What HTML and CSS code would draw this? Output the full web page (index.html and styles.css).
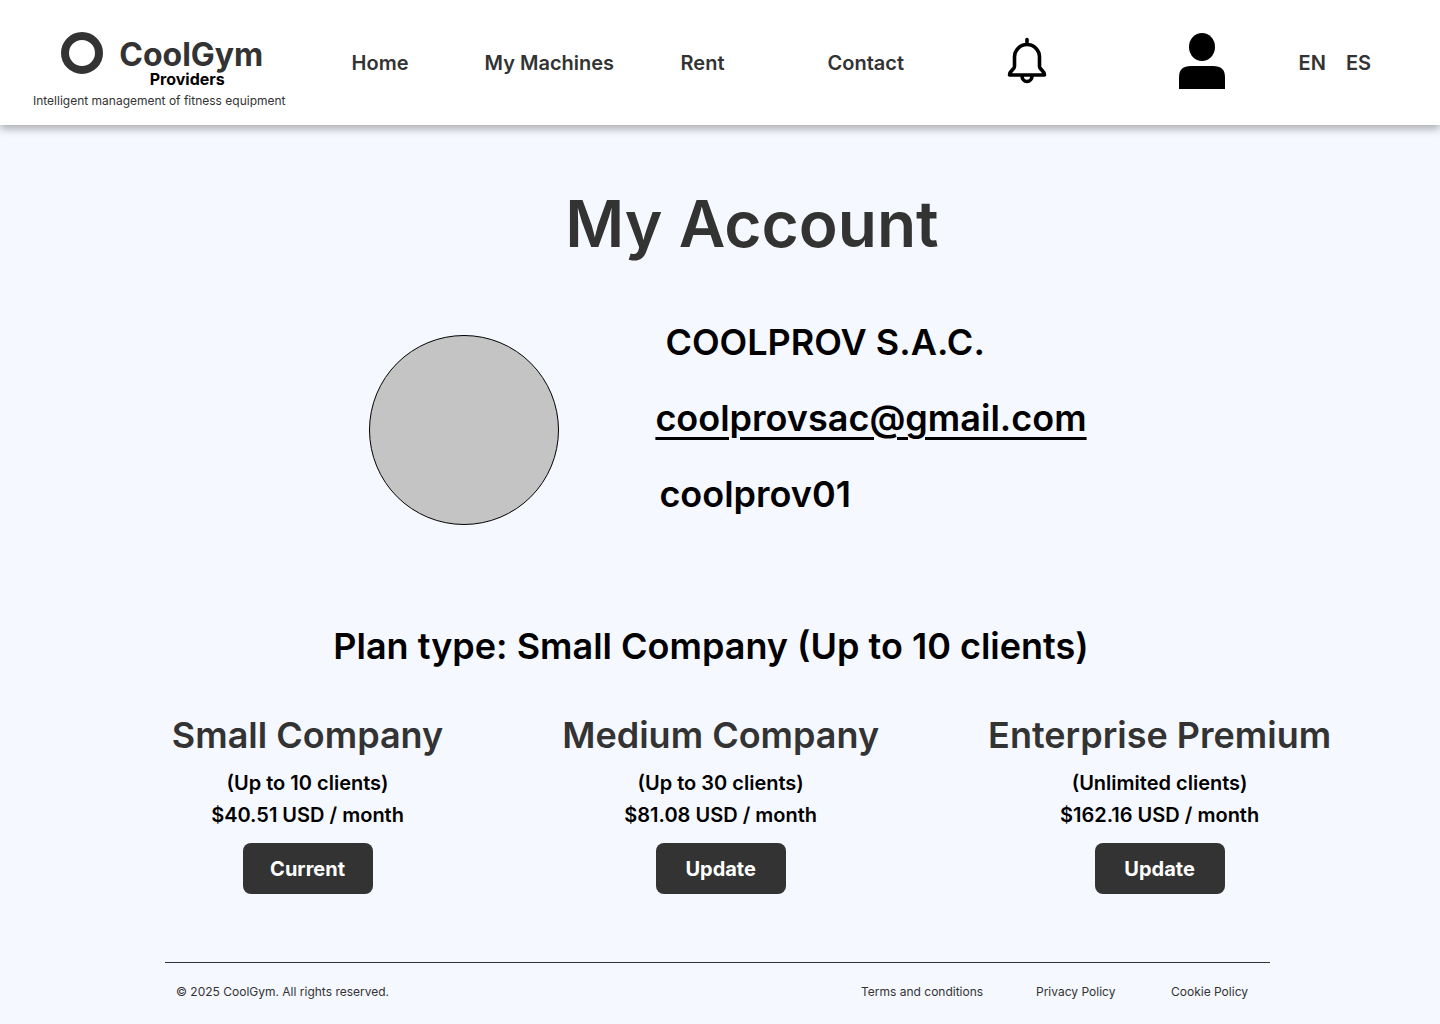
FILE: index.html
```html
<!DOCTYPE html>
<html lang="en">
<head>
<meta charset="utf-8">
<meta name="viewport" content="width=device-width, initial-scale=1">
<title>My Account - CoolGym Providers</title>
<link rel="stylesheet" href="styles.css">
</head>
<body>
<header class="header">
  <a class="brand" href="#">
    <span class="brand-row">
      <svg class="brand-ring" viewBox="0 0 42 42" aria-hidden="true"><circle cx="21" cy="21" r="17" fill="none" stroke="#333" stroke-width="8"/></svg>
      <span class="brand-name">CoolGym</span>
    </span>
    <span class="brand-sub">Providers</span>
    <span class="brand-tag">Intelligent management of fitness equipment</span>
  </a>
  <nav class="nav" aria-label="Main">
    <a href="#">Home</a>
    <a href="#">My Machines</a>
    <a href="#">Rent</a>
    <a href="#">Contact</a>
  </nav>
  <div class="tools">
    <button class="icon-button" type="button" aria-label="Notifications">
      <svg class="bell" viewBox="0 0 40 48" fill="none" stroke="#000" stroke-width="3.6" stroke-linecap="round" stroke-linejoin="round" aria-hidden="true"><path d="M20 2.500v5M7.500 20a12.500 12.500 0 0 1 25 0V29.500c0 3 5 4 5 8.500h-35c0-4.500 5-5.500 5-8.500zM15 39a5 5.500 0 0 0 10 0"/></svg>
    </button>
    <button class="icon-button" type="button" aria-label="Account">
      <svg class="person" viewBox="0 0 46 56" aria-hidden="true"><ellipse cx="23" cy="14" rx="13" ry="14"/><path d="M0 56V44Q0 33 12 33H34Q46 33 46 44V56Z"/></svg>
    </button>
    <div class="languages"><a href="#" lang="en">EN</a><a href="#" lang="es">ES</a></div>
  </div>
</header>
<main class="main">
  <h1 class="title">My Account</h1>
  <section class="profile" aria-label="Profile">
    <div class="avatar"></div>
    <div class="details">
      <p class="company">COOLPROV S.A.C.</p>
      <p><a href="mailto:coolprovsac@gmail.com">coolprovsac@gmail.com</a></p>
      <p class="username">coolprov01</p>
    </div>
  </section>
  <h2 class="plan-type">Plan type: Small Company (Up to 10 clients)</h2>
  <section class="plans" aria-label="Plans">
    <article class="plan">
      <h3>Small Company</h3>
      <p>(Up to 10 clients)</p>
      <p>$40.51 USD / month</p>
      <button type="button">Current</button>
    </article>
    <article class="plan">
      <h3>Medium Company</h3>
      <p>(Up to 30 clients)</p>
      <p>$81.08 USD / month</p>
      <button type="button">Update</button>
    </article>
    <article class="plan">
      <h3>Enterprise Premium</h3>
      <p>(Unlimited clients)</p>
      <p>$162.16 USD / month</p>
      <button type="button">Update</button>
    </article>
  </section>
</main>
<footer class="footer">
  <p>© 2025 CoolGym. All rights reserved.</p>
  <nav class="legal" aria-label="Legal">
    <a href="#">Terms and conditions</a>
    <a href="#">Privacy Policy</a>
    <a href="#">Cookie Policy</a>
  </nav>
</footer>
</body>
</html>
```
FILE: styles.css
```css
* { box-sizing: border-box; }
body { margin: 0; background: #f5f8ff; color: #000; font-family: Inter, sans-serif; font-weight: 600; }
h1, h2, h3, p { margin: 0; font-weight: 600; }
a { color: inherit; text-decoration: none; }
button { font: inherit; border: 0; cursor: pointer; }

.header { display: flex; align-items: center; min-height: 125px; padding: 0 69px 0 33px; background: #fff; color: #333; box-shadow: 0 4px 8px rgba(0, 0, 0, .3); }
.brand { display: flex; flex-direction: column; align-items: center; padding-top: 16px; white-space: nowrap; }
.brand-row { display: flex; align-items: flex-start; gap: 16px; height: 37px; padding-left: 6px; }
.brand-ring { width: 42px; height: 42px; }
.brand-name { font-size: 32px; line-height: 46px; font-weight: 700; }
.brand-sub { margin-left: 56px; font-size: 16px; line-height: 20px; font-weight: 700; color: #000; }
.brand-tag { margin-top: 4px; font-size: 12px; line-height: 16px; font-weight: 400; }
.nav { display: grid; grid-template-columns: 133px 196px 147px auto; margin-left: 66px; font-size: 20px; line-height: 24px; white-space: nowrap; }
.tools { display: flex; flex: 1; align-items: center; justify-content: flex-end; font-size: 20px; line-height: 24px; }
.icon-button { display: flex; padding: 0 0 4px; background: none; }
.bell { width: 40px; height: 48px; margin-right: 132px; }
.person { width: 46px; height: 56px; margin-right: 74px; }
.languages { display: flex; gap: 20px; }

.main { padding-top: 60px; }
.title { padding-left: 64px; font-size: 64px; line-height: 78px; text-align: center; color: #333; }
.profile { display: flex; justify-content: center; align-items: center; gap: 96px; margin-top: 57px; padding-left: 16px; font-size: 36px; line-height: 44px; }
.avatar { width: 190px; height: 190px; border: 1px solid #000; border-radius: 50%; background: #c4c4c4; }
.details { display: flex; flex-direction: column; gap: 32px; padding-bottom: 24px; }
.details a { text-decoration: underline 3px; text-underline-offset: 6px; }
.company { padding-left: 10px; }
.username { padding-left: 4px; }
.plan-type { margin-top: 84px; padding-right: 18px; font-size: 36px; line-height: 44px; text-align: center; }
.plans { display: grid; grid-template-columns: 8fr 8fr 9fr; margin-top: 45px; padding: 0 48px 0 101px; text-align: center; }
.plan { font-size: 20px; line-height: 32px; }
.plan h3 { margin-bottom: 10px; font-size: 36px; line-height: 44px; color: #333; }
.plan button { width: 130px; height: 51px; margin-top: 12px; border-radius: 8px; background: #333; color: #fff; font-weight: 700; }

.footer { display: flex; justify-content: space-between; margin: 68px 170px 0 165px; padding: 21px 22px 16px 11px; border-top: 1px solid #333; color: #333; font-size: 12px; line-height: 16px; }
.footer p, .footer a { font-weight: 400; }
.legal { display: grid; grid-template-columns: 175px 135px auto; }
```
